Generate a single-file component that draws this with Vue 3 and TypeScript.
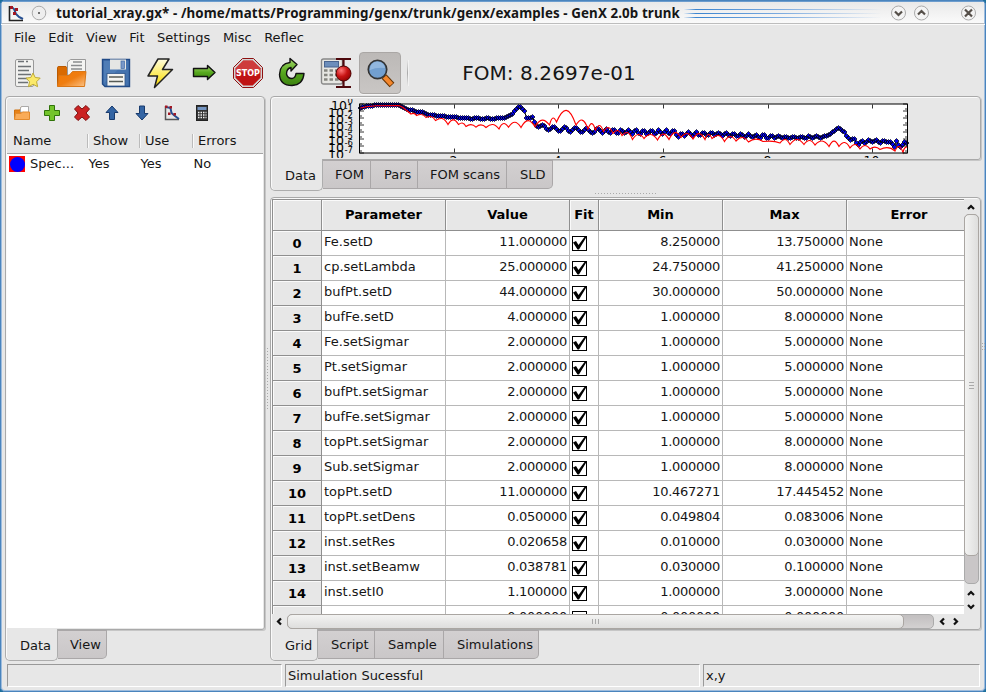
<script setup lang="ts">
interface Row {
  name: string
  value: string
  fit: boolean
  min: string
  max: string
  error: string
}

const menus: string[] = ['File', 'Edit', 'View', 'Fit', 'Settings', 'Misc', 'Reflec']
const plotTabs: string[] = ['FOM', 'Pars', 'FOM scans', 'SLD']
const gridTabs: string[] = ['Script', 'Sample', 'Simulations']
const heads: string[] = ['Parameter', 'Value', 'Fit', 'Min', 'Max', 'Error']

const row = (name: string, value: string, min: string, max: string): Row => ({
  name, value, min, max, fit: true, error: 'None',
})

const rows: Row[] = [
  row('Fe.setD', '11.000000', '8.250000', '13.750000'),
  row('cp.setLambda', '25.000000', '24.750000', '41.250000'),
  row('bufPt.setD', '44.000000', '30.000000', '50.000000'),
  row('bufFe.setD', '4.000000', '1.000000', '8.000000'),
  row('Fe.setSigmar', '2.000000', '1.000000', '5.000000'),
  row('Pt.setSigmar', '2.000000', '1.000000', '5.000000'),
  row('bufPt.setSigmar', '2.000000', '1.000000', '5.000000'),
  row('bufFe.setSigmar', '2.000000', '1.000000', '5.000000'),
  row('topPt.setSigmar', '2.000000', '1.000000', '8.000000'),
  row('Sub.setSigmar', '2.000000', '1.000000', '8.000000'),
  row('topPt.setD', '11.000000', '10.467271', '17.445452'),
  row('topPt.setDens', '0.050000', '0.049804', '0.083006'),
  row('inst.setRes', '0.020658', '0.010000', '0.030000'),
  row('inst.setBeamw', '0.038781', '0.030000', '0.100000'),
  row('inst.setI0', '1.100000', '1.000000', '3.000000'),
  { name: '', value: '0.000000', fit: false, min: '0.000000', max: '0.000000', error: '' },
]

type Pt = [number, number]

// Baseline of the measured reflectivity, in plot units.
const base: Pt[] = [
  [360, 106.8], [366, 105], [375, 104.3], [398, 104.3], [402, 106], [408, 108.8], [414, 110], [421, 111.5],
  [430, 113.8], [440, 115], [452, 116.3], [468, 117.3], [491, 118], [504, 116.6], [511, 114.5], [514, 110],
  [518, 106], [521, 107], [524, 110], [526, 116.5], [532, 118.5], [535, 122], [541, 126], [556, 128],
  [575, 129], [592, 130], [605, 130.3], [628, 130.6], [650, 131.3], [675, 131.3], [678, 135], [686, 133],
  [700, 133], [720, 133], [740, 134.2], [765, 135.5], [790, 136.6], [825, 136], [830, 132.5], [838, 126.8],
  [844, 131], [847, 137], [855, 139.5], [858, 143], [862, 140.5], [872, 140], [880, 141], [888, 140],
  [894, 145], [896, 140], [899, 148], [903, 140.5], [906, 143],
]

function level(x: number): number {
  for (let i = 1; i < base.length; i++) {
    if (x <= base[i][0]) {
      const [x0, y0] = base[i - 1]
      const [x1, y1] = base[i]
      return y0 + ((y1 - y0) * (x - x0)) / (x1 - x0)
    }
  }
  return base[base.length - 1][1]
}

function ripple(x: number): number {
  if (x < 410) return 0
  if (x < 532) return 0.5
  if (x < 600) return 2.2
  if (x < 700) return 2
  if (x < 770) return 1.5
  if (x < 826) return 0.9
  if (x < 850) return 0
  return 1.3
}

const measured: Pt[] = []
for (let x = 360; x <= 907; x += 2) {
  const period = x < 600 ? 11 : 7.5
  const y = level(x) + ripple(x) * Math.sin(((x - 600) / period) * Math.PI * 2)
  measured.push([x + 0.5, Math.round(y) + 0.5])
}
const measuredLine = measured.map((p) => p.join(',')).join(' ')
const markers = measured.map(([x, y]) => `M${x} ${y - 2.5}l2.5 2.5l-2.5 2.5l-2.5 -2.5z`).join('')

// Simulated curve: minima of the fringes with the crest height between them.
const fringes: [number, number, number][] = [
  [411, 113.5, 0], [416.5, 115, 112.8], [426, 117, 114], [435.5, 120, 116], [448, 124, 118], [458.5, 124, 119.3],
  [466, 126, 122.5], [476, 126.6, 124], [486, 127, 124.2], [499, 128.5, 124], [508.5, 126.8, 123],
  [521, 127, 121.7], [535, 126.3, 120], [549.5, 124.5, 119.5], [556.5, 121.5, 117.5], [576, 124.5, 109.7],
  [588, 128.5, 119.5], [595.5, 129.5, 123], [603.5, 131, 125], [613, 133, 127], [622, 135, 130], [632.5, 139, 132],
  [644, 138, 134], [657.5, 139.5, 134], [669, 139, 133.5], [681, 137, 132], [693, 138.5, 133], [705, 139, 133],
  [712, 138, 134], [724.5, 141, 135], [736, 140.5, 136], [748.5, 141.5, 137], [763, 141, 138.5],
  [780, 142.5, 140.5], [790, 144, 139], [804, 144, 139], [815, 144.5, 140], [829, 146, 140.5], [839, 146, 140.5],
  [850, 147.5, 142], [860, 148.5, 144], [870, 148.5, 145], [880, 149, 146.5], [895, 150.5, 147],
  [903, 152, 146], [907, 146, 147],
]
let simulated = 'M360 107.8L366 106.3L376 105.3L399 105L403 107L406 109.5'
fringes.forEach(([x, y, top], i) => {
  if (i === 0) {
    simulated += `L${x} ${y}`
    return
  }
  const [px, py] = fringes[i - 1]
  const w = x - px
  simulated += `C${px + w * 0.35} ${top * 1.32 - py * 0.32} ${x - w * 0.35} ${top * 1.32 - y * 0.32} ${x} ${y}`
})

const decades: number[] = [0, 1, 2, 3, 4, 5, 6, 7]
const xTicks: { x: number; label: string }[] = [
  { x: 454.5, label: '2' }, { x: 558.5, label: '4' }, { x: 663.5, label: '6' },
  { x: 768.5, label: '8' }, { x: 872.5, label: '10' },
]
</script>

<template>
  <div class="window">
    <header class="titlebar">
      <svg class="app-icon" width="17" height="17" viewBox="0 0 17 17">
        <path d="M1.5 1V15.5H15" fill="none" stroke="#222" stroke-width="1.6" />
        <path d="M3 1.5L6 4L8 9L11 12L15 14" fill="none" stroke="#264f91" stroke-width="2" />
        <path d="M2 1h3v3H2zM5 7h3v3H5zM7 3h3v3H7z" fill="#a31722" />
      </svg>
      <svg class="pin" width="16" height="16" viewBox="0 0 16 16">
        <circle cx="8" cy="8" r="6.8" fill="#eee" stroke="#aaa" />
        <circle cx="8" cy="8" r="1" fill="#444" />
      </svg>
      <span class="title">tutorial_xray.gx* - /home/matts/Programming/genx/trunk/genx/examples - GenX 2.0b trunk</span>
      <div class="stripes"><i></i><i></i><i></i></div>
      <svg class="win-btns" width="86" height="18" viewBox="0 0 86 18">
        <g fill="#f4f4f4" stroke="#aaa">
          <circle cx="8.5" cy="9" r="7" /><circle cx="31.5" cy="9" r="7" /><circle cx="78.5" cy="9" r="7" />
        </g>
        <g fill="none" stroke="#554f49" stroke-width="2.2">
          <path d="M5 7.5L8.5 11L12 7.5M28 10.5L31.5 7L35 10.5M75 5.500L82 12.500M82 5.500L75 12.500" />
        </g>
      </svg>
    </header>

    <nav class="menubar"><span v-for="m in menus" :key="m">{{ m }}</span></nav>

    <div class="toolbar">
      <div class="tool">
        <svg width="32" height="32" viewBox="0 0 32 32">
          <rect x="4.5" y="2.5" width="18" height="27" rx="1.5" fill="#f1f1ef" stroke="#999" />
          <path d="M7 4.5h6M15 4.5h2M7 9.5h13M7 13.5h11M7 17.5h13M7 21.5h9M7 25.5h10" stroke="#6d7275" stroke-width="1.7" />
          <path d="M22 16l2.2 4.5 5 .6-3.6 3.6 1 5-4.5-2.4-4.6 2.4 1-5-3.5-3.6 4.8-.6z" fill="#fbe969" stroke="#bda936" />
        </svg>
      </div>
      <div class="tool">
        <svg width="32" height="32" viewBox="0 0 32 32">
          <defs><linearGradient id="fold" x2="1" y2="1"><stop stop-color="#f57900" /><stop offset=".5" stop-color="#ef7d10" /><stop offset="1" stop-color="#fcc58a" /></linearGradient></defs>
          <path d="M2.5 29V10.5Q2.5 9.500 4 9.500H11l2 2.500H24V29z" fill="#d96a00" stroke="#bb5a00" />
          <path d="M12.500 18V5l3-2.500H30.500V18z" fill="#f4f4f2" stroke="#999" />
          <path d="M18 5h9M16 8.500h11M16 12h11" stroke="#8a8d8f" stroke-width="1.500" />
          <path d="M2.500 29.500L4 18.500H14l3.500-4H31L29.500 29.500z" fill="url(#fold)" stroke="#d97717" />
        </svg>
      </div>
      <div class="tool">
        <svg width="32" height="32" viewBox="0 0 32 32">
          <path d="M3.500 2.500H30.500V29.500H6L3.500 27V3z" fill="#4372ae" stroke="#204a87" stroke-width="1.400" />
          <path d="M5 4L5 26L28 4z" fill="#6e99ca" opacity=".3" />
          <rect x="11" y="2.500" width="16" height="10" fill="#e5e6e4" />
          <rect x="22" y="4" width="3.500" height="7.500" fill="#7898c8" stroke="#426ca6" stroke-width=".7" />
          <rect x="8" y="16.500" width="18" height="12.500" fill="#f4f4f1" stroke="#2e5488" stroke-width=".8" />
          <path d="M10 20h14M10 24.500h14" stroke="#555a55" stroke-width="1.700" />
        </svg>
      </div>
      <div class="tool">
        <svg width="32" height="32" viewBox="0 0 32 32">
          <defs><linearGradient id="bolt" x2="0" y2="1"><stop stop-color="#fffde0" /><stop offset=".6" stop-color="#fce94f" /><stop offset="1" stop-color="#f6d400" /></linearGradient></defs>
          <path d="M15 2H26L19.500 12.500H29.500L11.500 30.500L14.500 19H5z" fill="url(#bolt)" stroke="#222" stroke-width="1.500" stroke-linejoin="round" />
        </svg>
      </div>
      <div class="tool">
        <svg width="32" height="32" viewBox="0 0 32 32">
          <defs><linearGradient id="grn" x2="0" y2="1"><stop stop-color="#a3d56a" /><stop offset=".5" stop-color="#57a91e" /><stop offset="1" stop-color="#3c8211" /></linearGradient></defs>
          <path d="M5.500 11.500H19.500V8.500L27 15.500L19.500 22.500V19.500H5.500z" fill="url(#grn)" stroke="#111" stroke-width="1.400" stroke-linejoin="round" />
        </svg>
      </div>
      <div class="tool">
        <svg width="32" height="32" viewBox="0 0 32 32">
          <path d="M10.500 1.500H21.500L30.500 10.500V21.500L21.500 30.500H10.500L1.500 21.500V10.500z" fill="#d4d4d4" stroke="#8f1111" />
          <path d="M11.300 3.500H20.700L28.500 11.300V20.700L20.700 28.500H11.300L3.500 20.700V11.300z" fill="#bf1414" />
          <path d="M11.300 3.500H20.700L28.500 11.300V15H3.500V11.300z" fill="#d95757" opacity=".6" />
          <text x="16" y="19.300" text-anchor="middle" class="stop">STOP</text>
        </svg>
      </div>
      <div class="tool">
        <svg width="32" height="32" viewBox="0 0 32 32">
          <path d="M14 5.500V1.500L21 7.500L15 14V10.500Q10.500 11.500 10.500 17Q11.500 21.500 16 21.500Q19.500 21 20 16.500H28Q27 28 16 28.500Q4 28.500 3.500 17.500Q4 6.500 14 5.500z" fill="url(#grn)" stroke="#111" stroke-width="1.400" stroke-linejoin="round" />
        </svg>
      </div>
      <div class="tool">
        <svg width="32" height="32" viewBox="0 0 32 32">
          <defs><radialGradient id="ball" cx=".35" cy=".3" r=".8"><stop stop-color="#f77" /><stop offset=".5" stop-color="#c81414" /><stop offset="1" stop-color="#8a0000" /></radialGradient></defs>
          <rect x="1.500" y="2" width="21" height="25" rx="2" fill="#e6e6e2" stroke="#888" stroke-width="1.400" />
          <rect x="4.500" y="4.500" width="14" height="5.500" fill="#6c8ebb" stroke="#49648f" />
          <path d="M4 13.500h16M4 18h16M4 22.500h16" stroke="#85857f" stroke-width="2.500" stroke-dasharray="3.500 2" />
          <path d="M16 2H31M23.500 2V30M16 30H31" stroke="#4d080c" stroke-width="2.200" fill="none" />
          <circle cx="23.500" cy="16.500" r="7.500" fill="url(#ball)" stroke="#4d0000" />
        </svg>
      </div>
      <div class="tool pressed">
        <svg width="32" height="32" viewBox="0 0 32 32">
          <path d="M20 19.500L28 28" stroke="#633100" stroke-width="6.500" />
          <path d="M20.500 20L27.500 27.500" stroke="#f4872d" stroke-width="4.500" />
          <circle cx="13.500" cy="12.500" r="9.200" fill="#729fcf" stroke="#333" stroke-width="1.700" />
          <path d="M6 13A7.500 7.500 0 0 1 21 11Q12.500 10 6 13z" fill="#a9c8e8" opacity=".6" />
        </svg>
      </div>
      <div class="tool-sep"></div>
      <div class="fom">FOM: 8.2697e-01</div>
    </div>

    <main class="body">
      <section class="left">
        <div class="pane data-pane">
          <div class="small-tools">
            <svg width="18" height="18" viewBox="0 0 18 18">
              <path d="M1.500 15V6H7l1-3h7.500V9z" fill="#e88217" stroke="#cf700e" /><path d="M7.500 8V3.500L9 2.500h6.500V9z" fill="#fff" stroke="#aaa" />
              <path d="M1.500 15.500L2.500 9.500H8l1.500-1.500H16.500V15.500z" fill="#f9ab57" stroke="#e38a2c" />
            </svg>
            <svg width="18" height="18" viewBox="0 0 18 18"><path d="M6.500 1.500H11.500V6.500H16.500V11.500H11.500V16.500H6.500V11.500H1.500V6.500H6.500z" fill="#73c42b" stroke="#2f7309" stroke-linejoin="round" /></svg>
            <svg width="18" height="18" viewBox="0 0 18 18"><path d="M5 1.500L9 5L13 1.500L16.500 5L13 9L16.500 13L13 16.500L9 13L5 16.500L1.500 13L5 9L1.500 5z" fill="#cb2323" stroke="#7c1111" stroke-linejoin="round" /></svg>
            <svg width="18" height="18" viewBox="0 0 18 18"><path d="M9 2L15 8.500H11.500V15.500H6.500V8.500H3z" fill="#3465a4" stroke="#183a6d" stroke-linejoin="round" /></svg>
            <svg width="18" height="18" viewBox="0 0 18 18"><path d="M9 16L15 9.500H11.500V2H6.500V9.500H3z" fill="#3465a4" stroke="#183a6d" stroke-linejoin="round" /></svg>
            <svg width="18" height="18" viewBox="0 0 18 18">
              <path d="M2.500 2V15.500H16" fill="none" stroke="#555" stroke-width="1.500" /><path d="M3 3L7.500 4L8.500 9L12 12L16 15" fill="none" stroke="#264f91" stroke-width="2" />
              <path d="M2 1.500h2.500V4H2zM6.500 2H9v2.500H6.500zM5 8.500h2.500V11H5zM10.500 9H13v2.500h-2.500z" fill="#a31722" />
            </svg>
            <svg width="18" height="18" viewBox="0 0 18 18">
              <rect x="3.500" y="1.500" width="11" height="15" fill="#333" stroke="#222" /><rect x="4.500" y="3" width="9" height="3" fill="#7394c1" />
              <path d="M5 8.500h8.500M5 11h8.500M5 13.500h8.500" stroke="#eee" stroke-width="1.500" stroke-dasharray="1.500 1" />
            </svg>
          </div>
          <div class="list-head"><span>Name</span><span>Show</span><span>Use</span><span>Errors</span></div>
          <div class="list-body">
            <div class="list-row">
              <span class="name"><svg width="16" height="16" viewBox="0 0 16 16"><rect width="16" height="16" fill="#f00" /><circle cx="8.500" cy="8.500" r="7.500" fill="#00f" /></svg>Spec...</span>
              <span>Yes</span><span>Yes</span><span>No</span>
            </div>
          </div>
        </div>
        <div class="tabs left-tabs"><div class="tab active">Data</div><div class="tab last">View</div></div>
      </section>

      <div class="v-split"><i></i></div>

      <section class="right">
        <div class="pane plot-pane">
          <svg class="plot" width="708" height="59" viewBox="271 98.500 708 59">
            <rect x="359.500" y="103.500" width="548" height="49" fill="#fff" />
            <g class="tick-text">
              <g v-for="d in decades" :key="d">
                <text :x="d ? 328 : 331" :y="109.500 + d * 7">10</text>
                <text class="exp" x="353" :y="103 + d * 7.100" text-anchor="end">{{ d ? '-' + d : '0' }}</text>
              </g>
              <text v-for="t in xTicks" :key="t.label" :x="t.x - 1" y="164.500" text-anchor="middle">{{ t.label }}</text>
            </g>
            <polyline :points="measuredLine" fill="none" stroke="#000" />
            <path :d="markers" fill="#0000f0" stroke="#000" stroke-width=".7" />
            <path :d="simulated" fill="none" stroke="#f00" stroke-width="1.150" />
            <path v-for="t in xTicks" :key="t.x" :d="`M${t.x} 104v4M${t.x} 152v-4`" stroke="#000" stroke-width=".8" />
            <path v-for="d in decades" :key="'d' + d" :d="`M360 ${103.5 + d * 7}h4M907 ${103.5 + d * 7}h-4`" stroke="#000" stroke-width=".8" />
            <path v-for="d in decades.slice(1)" :key="'m' + d" :d="`M360 ${101.5 + d * 7}h2M907 ${101.5 + d * 7}h-2`" stroke="#000" stroke-width=".8" />
            <rect x="359.500" y="103.500" width="548" height="49" fill="none" stroke="#000" />
          </svg>
        </div>
        <div class="tabs plot-tabs"><div class="tab active">Data</div><div v-for="(t, i) in plotTabs" :key="t" class="tab" :class="['p' + i, { last: i === 3 }]">{{ t }}</div></div>
        <div class="h-split"><i></i></div>
        <div class="pane grid-pane">
          <div class="grid-top">
            <div class="table">
              <div class="tr head"><div class="th"></div><div v-for="h in heads" :key="h" class="th">{{ h }}</div></div>
              <div v-for="(r, i) in rows" :key="i" class="tr">
                <div class="th">{{ i < 15 ? i : '' }}</div>
                <div class="td">{{ r.name }}</div>
                <div class="td num">{{ r.value }}</div>
                <div class="td check">
                  <svg width="17" height="17" viewBox="0 0 17 17">
                    <rect x="1.500" y="1.500" width="14" height="14" fill="#fff" stroke="#000" />
                    <path v-if="r.fit" d="M2 7.500L5 6L7.500 10L13.500 2H15.500L8 14.500H6.500z" fill="#000" />
                  </svg>
                </div>
                <div class="td num">{{ r.min }}</div>
                <div class="td num">{{ r.max }}</div>
                <div class="td">{{ r.error }}</div>
              </div>
            </div>
            <div class="vbar">
              <svg width="14" height="14" viewBox="0 0 14 14"><path d="M4 9L7 6L10 9" /></svg>
              <div class="vtrack"><div class="vthumb"><i></i><i></i><i></i></div></div>
              <svg width="14" height="16" viewBox="0 0 14 16"><path d="M4 11L7 8L10 11" /></svg>
              <svg width="14" height="14" viewBox="0 0 14 14"><path d="M4 5L7 8L10 5" /></svg>
            </div>
          </div>
          <div class="hbar">
            <svg width="15" height="15" viewBox="0 0 15 15"><path d="M9 4.500L6 7.500L9 10.500" /></svg>
            <div class="htrack"><div class="hthumb"><i></i><i></i><i></i></div></div>
            <svg width="14" height="15" viewBox="0 0 14 15"><path d="M9 4.500L6 7.500L9 10.500" /></svg>
            <svg width="14" height="15" viewBox="0 0 14 15"><path d="M5 4.500L8 7.500L5 10.500" /></svg>
          </div>
        </div>
        <div class="tabs grid-tabs"><div class="tab active">Grid</div><div v-for="(t, i) in gridTabs" :key="t" class="tab" :class="['g' + i, { last: i === 2 }]">{{ t }}</div></div>
      </section>
      <div class="edge-grip"><i></i><i></i></div>
    </main>

    <footer class="status"><div></div><div>Simulation Sucessful</div><div>x,y</div></footer>
  </div>
</template>

<style>
body { margin: 0; background: #1c6f9c; overflow: hidden; }
</style>

<style scoped>
* { box-sizing: border-box; }
svg { display: block; flex: none; }
.window {
  width: 986px; height: 692px; overflow: hidden; display: flex; flex-direction: column;
  border: 1px solid #4a84bd; border-radius: 5px; background: #e7e7e7;
  box-shadow: inset 0 0 0 1px #9dbcdd; color: #161616;
  font: 13px/16px "DejaVu Sans", "Liberation Sans", sans-serif; white-space: nowrap;
}
.titlebar {
  height: 23px; flex: none; display: flex; align-items: center; margin: 0 1px;
  background: linear-gradient(#e9e9e9, #fafafa); border-bottom: 1px solid #bdbdbd; border-top: 1px solid #6c9ccd;
}
.app-icon { margin-left: 6px; margin-top: 2px; }
.pin { margin-left: 6px; }
.title { margin-left: 9px; width: 628px; flex: none; font: bold 13.330px/20px "Noto Sans", "DejaVu Sans", sans-serif; letter-spacing: .110px; }
.stripes { flex: none; width: 198px; display: grid; gap: 3px; margin-top: 2px; }
.stripes i { height: 1px; background: linear-gradient(90deg, #e8eef5, #3b84cf 6%, #7eace0 50%, transparent); }
.win-btns { margin-left: 8px; }

.menubar { height: 28px; flex: none; display: flex; gap: 12.500px; padding: 5px 0 0 13px; border-top: 1px solid #fafafa; }
.toolbar { height: 44px; flex: none; display: flex; align-items: center; padding: 0 0 2px 4px; }
.tool { width: 44.150px; height: 42px; display: flex; align-items: center; justify-content: center; flex: none; }
.tool.pressed { width: 42px; margin-left: 1px; background: linear-gradient(#bcb9b7, #c9c6c4); border: 1px solid #aaa7a5; border-radius: 4px; box-shadow: 0 1px #f5f5f5; }
.tool-sep { width: 1px; height: 26px; margin-left: 6px; background: linear-gradient(transparent, #aaa, transparent); box-shadow: 1px 0 #f2f2f2; }
.fom { margin-left: 54px; font-size: 20px; line-height: 24px; letter-spacing: .080px; }
.stop { font: bold 8px "DejaVu Sans", sans-serif; fill: #fff; }

.body { height: 565px; flex: none; display: flex; padding: 0 0 0 4px; }
.left { width: 260px; flex: none; }
.right { width: 711px; flex: none; }
.pane { border: 1px solid #a9a9a9; border-radius: 4px 4px 3px 0; box-shadow: inset 1px 1px #fafafa, 1px 1px #c6c6c6; }
.data-pane { height: 534px; display: flex; flex-direction: column; padding: 1px; }
.small-tools { height: 32px; flex: none; display: flex; gap: 12px; padding: 6px 0 0 6px; }
.list-head { display: flex; height: 24px; border-bottom: 1px solid #a5a5a5; line-height: 20px; padding-top: 1px; flex: none; }
.list-head span { position: relative; padding-left: 6px; width: 52px; }
.list-head span:first-child { width: 80px; }
.list-head span:nth-child(3) { width: 53px; }
.list-head span:not(:first-child)::before { content: ''; position: absolute; left: 0; top: 3px; width: 1px; height: 14px; background: #bbb; box-shadow: 1px 0 #f9f9f9; }
.list-body { flex: 1; background: #fff; }
.list-row { display: flex; height: 19px; padding-top: 2px; line-height: 16px; }
.list-row span { width: 52px; }
.list-row .name { width: 81.500px; display: flex; gap: 5px; padding-left: 2px; }
.list-row span:nth-child(3) { width: 53px; }

.tabs { display: flex; height: 30px; }
.tab { height: 29px; padding-left: 13px; line-height: 27px; background: linear-gradient(#d3d0d1, #cac7c8); border: 1px solid #aaa7a8; border-left: 0; }
.tab.last { border-radius: 0 0 5px 0; }
.tab.active { height: 32px; line-height: 33px; background: #e7e7e7; border: 1px solid #adadad; border-top: 0; border-radius: 0 0 5px 5px; box-shadow: inset 1px 0 #fafafa; position: relative; top: -1px; }
.left-tabs .tab.active { width: 53px; padding-left: 14px; }
.left-tabs .tab.last { width: 49px; padding-left: 12px; }
.plot-tabs .tab.active { width: 53px; padding-left: 14px; }
.p0 { width: 48px; padding-left: 12px; } .p1 { width: 47px; } .p2 { width: 89px; padding-left: 12px; } .p3 { width: 46px; }
.grid-tabs .tab.active { width: 48px; padding-left: 14px; }
.g0 { width: 57px; } .g1 { width: 69px; } .g2 { width: 95px; }

.v-split { width: 5px; flex: none; display: flex; align-items: center; justify-content: center; }
.v-split i { width: 1px; height: 62px; background: repeating-linear-gradient(#aaa 0 1px, transparent 1px 3px); }
.edge-grip { flex: 1; display: flex; align-items: center; justify-content: flex-end; gap: 1px; }
.edge-grip i { width: 1px; height: 7px; margin-top: -65px; background: repeating-linear-gradient(#aaa 0 1px, transparent 1px 3px); }
.h-split { height: 7px; display: flex; justify-content: center; padding-top: 3px; }
.h-split i { width: 62px; height: 1px; background: repeating-linear-gradient(90deg, #aaa 0 1px, transparent 1px 3px); }
.plot-pane { height: 64px; padding: 1.500px 0 0 0; }
.plot { overflow: hidden; }
.tick-text { font: 12.500px "DejaVu Sans", sans-serif; fill: #000; }
.exp { font-size: 8.500px; }

.grid-pane { height: 433px; padding: 1px; }
.grid-top { display: flex; height: 415px; }
.table { width: 692px; flex: none; height: 415px; overflow: hidden; border-left: 1px solid #8f8f8f; border-top: 1px solid #8f8f8f; background: #fff; }
.tr { display: grid; grid-template: 25px / 49px 124px 124px 29px 124px 124px 125px; }
.tr.head { grid-template-rows: 31px; }
.td { border-right: 1px solid #b8b8b8; border-bottom: 1px solid #b8b8b8; padding: 3px 2px 0; }
.num { text-align: right; letter-spacing: -.270px; }
.th { background: #e7e7e7; border-right: 1px solid #8f8f8f; border-bottom: 1px solid #8f8f8f; box-shadow: inset 1px 1px #fafafa; text-align: center; font-weight: bold; color: #000; line-height: 26px; }
.head .th { line-height: 29px; }
.check { padding: 4px 0 0 1px; }
.vbar { width: 15px; padding-top: 1px; }
.vbar path, .hbar path { fill: none; stroke: #111; stroke-width: 2.200; }
.vtrack { width: 15px; height: 370px; background: #c9c6c7; border: 1px solid #aaa; border-radius: 5px; }
.vthumb { width: 15px; height: 342px; margin: -1px; border: 1px solid #aaa6a2; border-radius: 5px; background: linear-gradient(90deg, #f3f3f2, #dededd); display: flex; flex-direction: column; justify-content: center; align-items: center; gap: 2px; }
.vthumb i { width: 5px; height: 1px; background: #aaa; }
.hbar { height: 15px; display: flex; }
.htrack { width: 647px; height: 15px; margin-right: 1px; background: linear-gradient(#c2bfc0, #d3d1d1); border: 1px solid #aaa; border-radius: 5px; }
.hthumb { width: 617px; height: 15px; margin: -1px; border: 1px solid #aaa6a2; border-radius: 5px; background: linear-gradient(#f3f3f2, #dededd); display: flex; justify-content: center; align-items: center; gap: 2px; }
.hthumb i { width: 1px; height: 5px; background: #aaa; }

.status { display: flex; gap: 3px; height: 23px; margin: 3px 5px 0 6px; flex: none; }
.status div { border: 1px solid; border-color: #999 #fff #fff #999; padding: 3px 0 0 2px; }
.status div:nth-child(1) { width: 275px; }
.status div:nth-child(2) { width: 415px; }
.status div:nth-child(3) { flex: 1; }
</style>
